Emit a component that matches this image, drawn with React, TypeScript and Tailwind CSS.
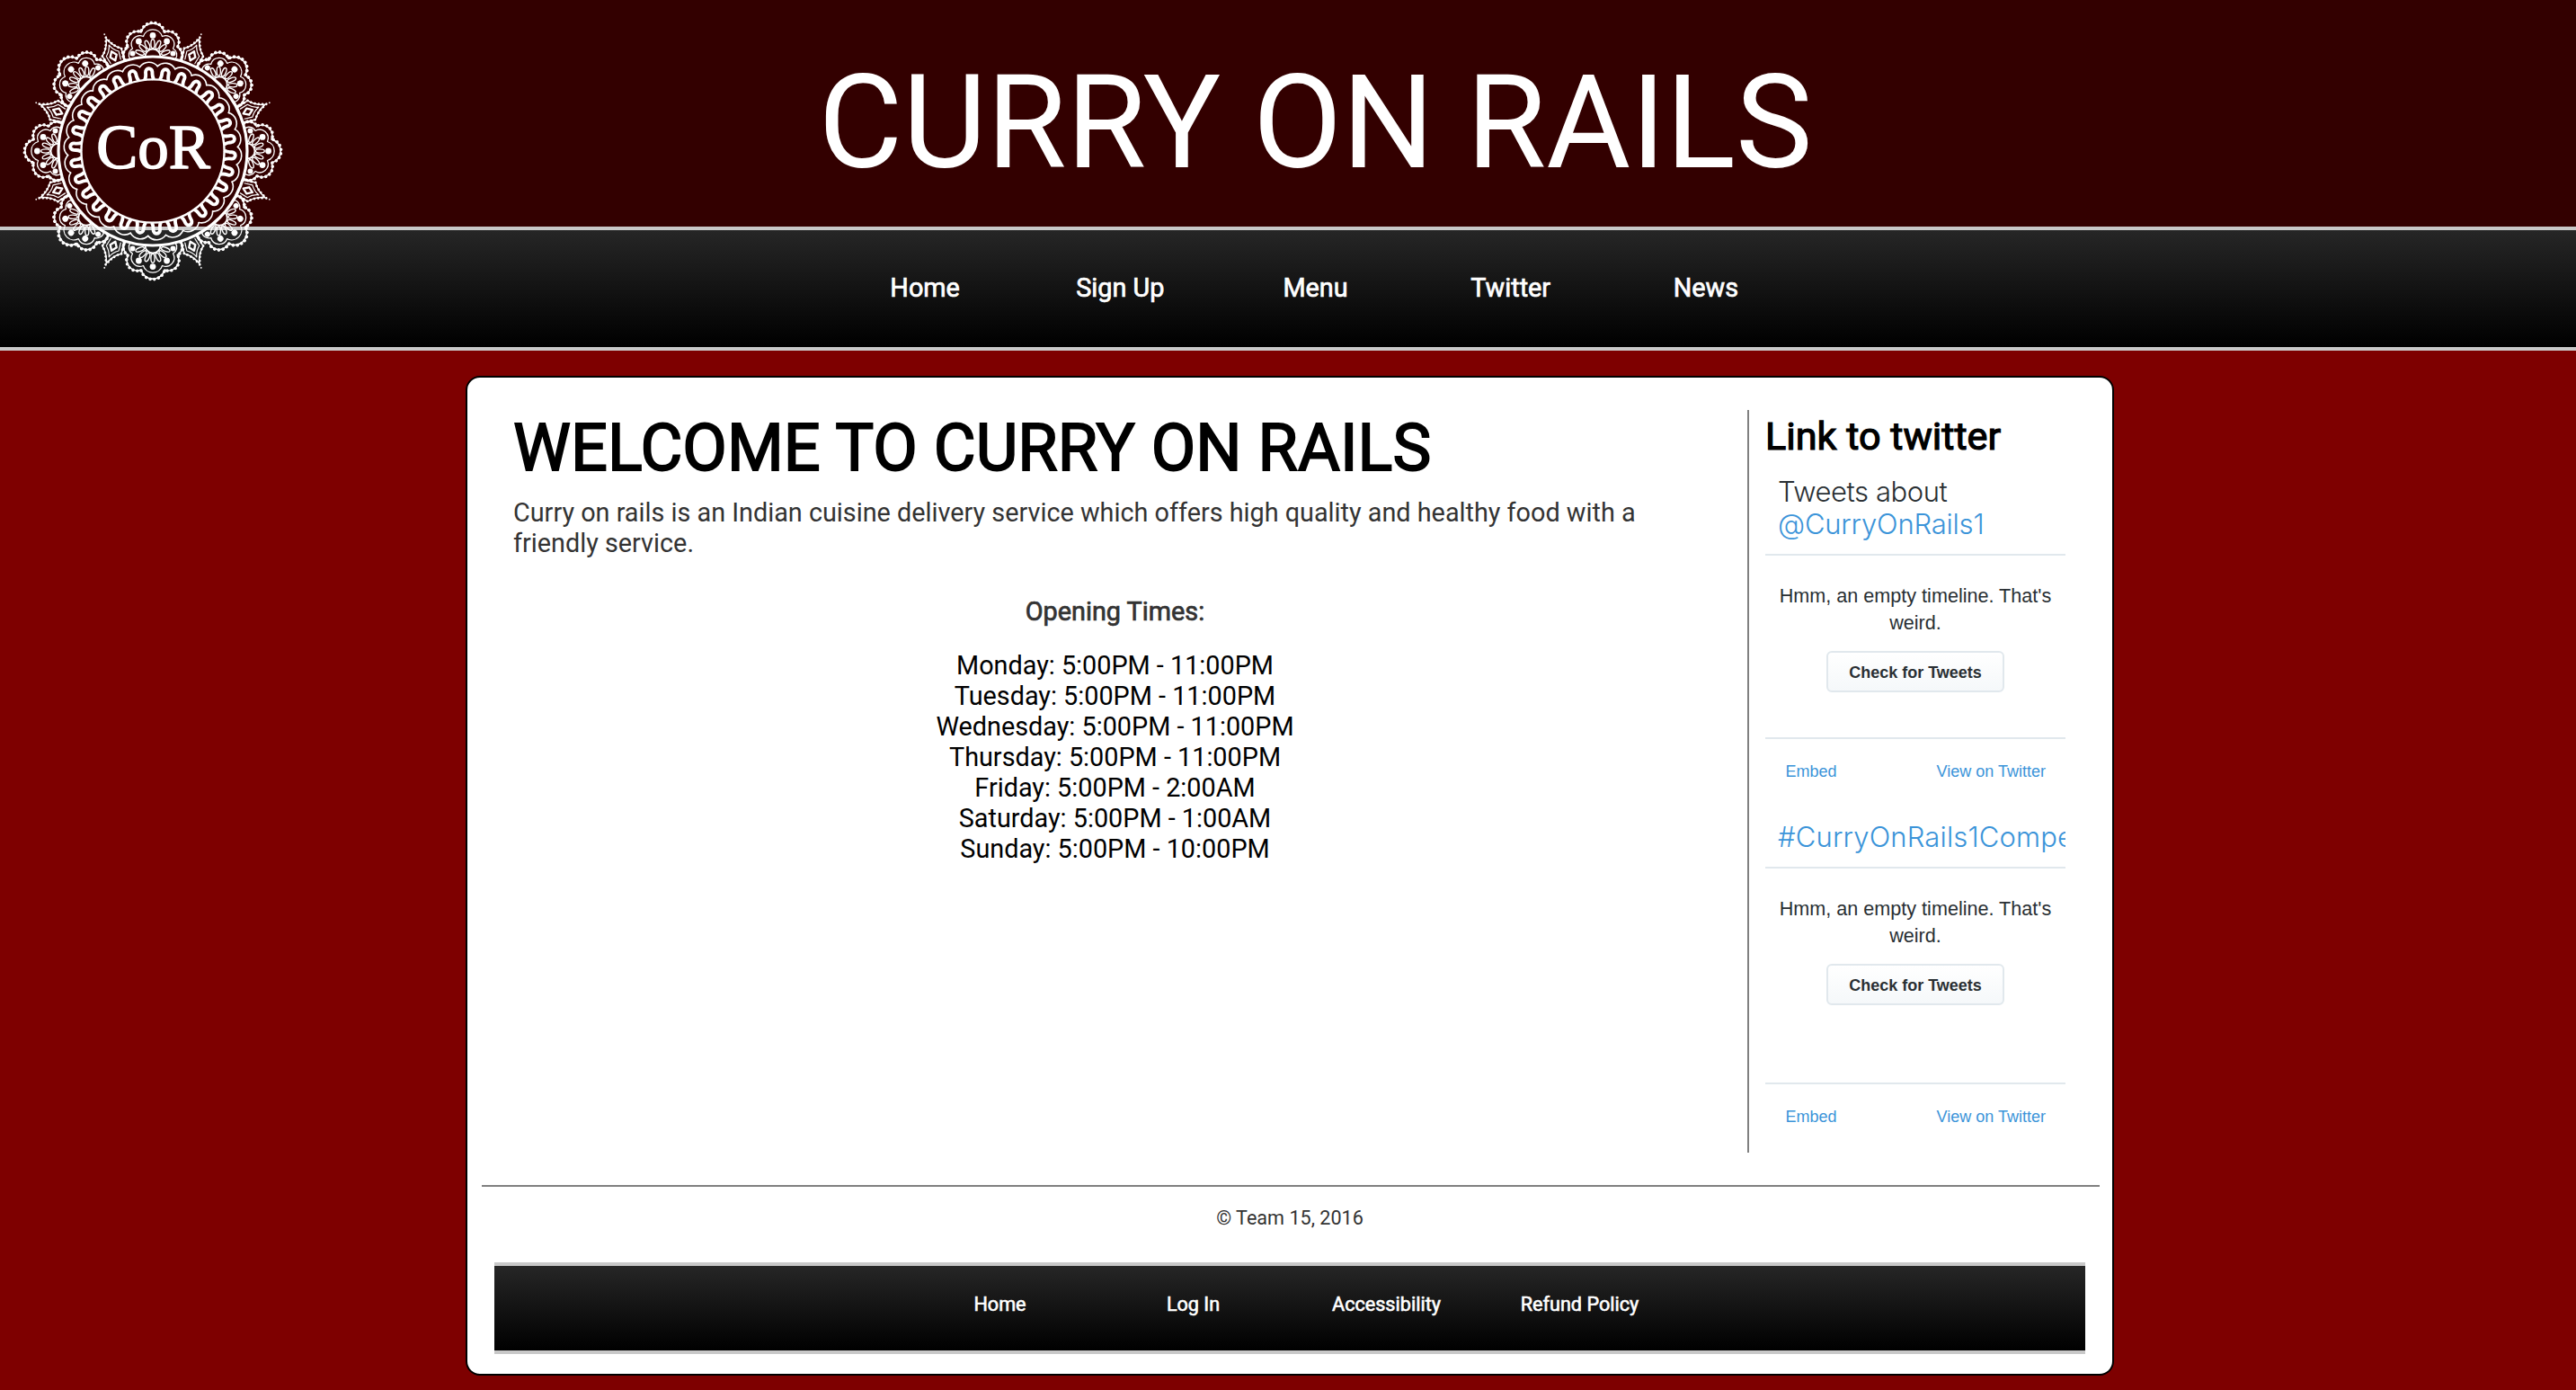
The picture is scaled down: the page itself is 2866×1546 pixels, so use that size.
const LOBES =
  "M-30,-101 A9.3,9.3 0 0 1 -27.2,-115.5 A11.5,11.5 0 0 1 -13,-132 A13.4,13.4 0 0 1 13,-132 A11.5,11.5 0 0 1 27.2,-115.5 A9.3,9.3 0 0 1 30,-101";
const MID_LOBES =
  "M-25,-102 A8,8 0 0 1 -22.5,-114 A9.5,9.5 0 0 1 -10.5,-127.5 A11,11 0 0 1 10.5,-127.5 A9.5,9.5 0 0 1 22.5,-114 A8,8 0 0 1 25,-102";

const PETALS = [-69, -46, -23, 0, 23, 46, 69];
const FLOWERS = [0, 45, 90, 135, 180, 225, 270, 315];
const LOOPS = Array.from({ length: 30 }, (_, i) => i * 12 - 2.8);

function Flower() {
  return (
    <>
      <path d={LOBES} strokeWidth="1.6" />
      <path d={LOBES} strokeWidth="3.6" strokeDasharray="0 4.7" transform="translate(0 -104) scale(1.015) translate(0 104)" />
      <path d={MID_LOBES} strokeWidth="1.3" />
      <path d="M-8.5,-105 A8.5,8.5 0 0 1 8.5,-105" strokeWidth="1.8" />
      {PETALS.map((a) => (
        <ellipse key={a} cx="0" cy="-119.3" rx="2.1" ry="5" strokeWidth="1.4" transform={`rotate(${a} 0 -104)`} />
      ))}
      <g fill="#fff" stroke="none">
        <circle cx="0" cy="-128.6" r="3.4" />
        <circle cx="-15.6" cy="-122" r="3.4" />
        <circle cx="15.6" cy="-122" r="3.4" />
        <circle cx="-22.5" cy="-108.5" r="3" />
        <circle cx="22.5" cy="-108.5" r="3" />
      </g>
    </>
  );
}

function Kite() {
  return (
    <>
      <path d="M-9,-106 L-11.5,-119 Q-4,-124 0,-135 Q4,-124 11.5,-119 L9,-106" strokeWidth="1.5" />
      <path d="M-9,-106 L-11.5,-119 Q-4,-124 0,-137 Q4,-124 11.5,-119 L9,-106" strokeWidth="2.8" strokeDasharray="0 4.4" />
      <path d="M-6,-108 L-7.5,-117 Q-2,-121 0,-127.5 Q2,-121 7.5,-117 L6,-108" strokeWidth="1.2" />
      <path d="M0,-120 L3.8,-114.5 L0,-109 L-3.8,-114.5 Z" strokeWidth="2.4" />
      <circle cx="0" cy="-140.5" r="0.9" fill="#fff" stroke="none" />
    </>
  );
}

function Logo() {
  return (
    <svg
      viewBox="-150 -150 300 300"
      className="absolute left-5 top-[18px] size-[300px]"
      fill="none"
      stroke="#fff"
      strokeLinecap="round"
      strokeLinejoin="round"
    >
      {FLOWERS.map((a) => (
        <g key={a} transform={`rotate(${a})`}>
          <Flower />
        </g>
      ))}
      {FLOWERS.map((a) => (
        <g key={a} transform={`rotate(${a + 22.5})`}>
          <Kite />
        </g>
      ))}
      <circle r="105" strokeWidth="3.2" />
      <circle r="79.6" strokeWidth="2.4" />
      {LOOPS.map((a) => (
        <g key={a} transform={`rotate(${a})`}>
          <path d="M-5.2,-79.5 Q-3.4,-82 -3.7,-88 A3.7,3.9 0 0 1 3.7,-88 Q3.4,-82 5.2,-79.5" strokeWidth="3.9" strokeLinecap="butt" />
          <path d="M-9.9,-94 A12.5,12.5 0 0 1 9.9,-94" strokeWidth="1.6" />
        </g>
      ))}
      <text
        x="0.5"
        y="19"
        textAnchor="middle"
        fill="#fff"
        strokeWidth="1.5"
        className="font-['Liberation_Serif',serif] text-[69px]"
      >
        CoR
      </text>
    </svg>
  );
}

const NAV = ["Home", "Sign Up", "Menu", "Twitter", "News"];
const FOOTER_NAV = ["Home", "Log In", "Accessibility", "Refund Policy"];
const HOURS = [
  "Monday: 5:00PM - 11:00PM",
  "Tuesday: 5:00PM - 11:00PM",
  "Wednesday: 5:00PM - 11:00PM",
  "Thursday: 5:00PM - 11:00PM",
  "Friday: 5:00PM - 2:00AM",
  "Saturday: 5:00PM - 1:00AM",
  "Sunday: 5:00PM - 10:00PM",
];

function EmptyTimeline({ tall = false }: { tall?: boolean }) {
  return (
    <>
      <div
        className={`flex flex-col items-center border-y-2 border-[#e1e8ed] pt-[30px] text-[#292f33] ${tall ? "h-[242px]" : "h-[206px]"}`}
      >
        <p className="w-[310px] text-center text-[21.6px] leading-[30px]">Hmm, an empty timeline. That's weird.</p>
        <button className="mt-4 h-[46px] w-[198px] rounded-md border-2 border-[#e1e8ed] bg-linear-to-b/srgb from-white to-[#f5f8fa] pt-0.5 text-[18px] leading-none font-bold">
          Check for Tweets
        </button>
      </div>
      <div className="flex justify-between pt-[26px] pr-[22px] pl-[22.5px] text-[18px] leading-5 text-[#3b94d9]">
        <a>Embed</a>
        <a>View on Twitter</a>
      </div>
    </>
  );
}

export default function App() {
  return (
    <div className="relative h-[1546px] w-[2866px] overflow-hidden bg-[#7e0000] font-[Roboto,sans-serif] text-[28.8px] leading-[34px] text-black">
      <header className="h-[252px] bg-[#330000] pt-[52px] pl-[61px] text-center text-[144px] leading-[169px] text-white">
        <h1>CURRY ON RAILS</h1>
      </header>
      <nav className="flex h-[138px] justify-center border-y-4 border-[#c8c8c8] bg-linear-to-b/srgb from-[#262626] to-black pt-[47px] pl-[61px] text-white">
        <ul className="grid w-[1086px] grid-cols-5 text-center [-webkit-text-stroke:0.7px_white]">
          {NAV.map((n) => (
            <li key={n}>{n}</li>
          ))}
        </ul>
      </nav>
      <Logo />

      <main className="mt-7 ml-[518px] flex h-[1112px] w-[1834px] flex-col rounded-2xl border-2 border-black bg-white px-4 pt-9">
        <div className="flex h-[826px]">
          <section className="w-[1408px] pl-[35px]">
            <h2 className="text-[72px] leading-[85px] tracking-[0.04px] [-webkit-text-stroke:1.8px_black]">
              WELCOME TO CURRY ON RAILS
            </h2>
            <p className="mt-3 w-[1300px] text-[#333]">
              Curry on rails is an Indian cuisine delivery service which offers high quality and healthy food with a
              friendly service.
            </p>
            <div className="mt-[42px] w-[1339px] text-center">
              <h3 className="text-[#333] [-webkit-text-stroke:0.7px_#333]">Opening Times:</h3>
              <ul className="mt-[26px]">
                {HOURS.map((h) => (
                  <li key={h}>{h}</li>
                ))}
              </ul>
            </div>
          </section>
          <aside className="w-[354px] border-l-2 border-[#808080] pt-1 pl-[18px] font-['Liberation_Sans',sans-serif]">
            <h2 className="font-[Roboto,sans-serif] text-[43.2px] leading-[51px] [-webkit-text-stroke:1.2px_black]">
              Link to twitter
            </h2>
            <div className="mt-[18px] h-[87px] pl-[14px] font-[Inter,sans-serif] text-[31px] leading-9 font-light">
              <p className="tracking-[-0.45px] text-[#292f33]">Tweets about</p>
              <p className="tracking-[-0.2px] text-[#3b94d9]">@CurryOnRails1</p>
            </div>
            <EmptyTimeline />
            <p className="mt-[45px] h-[51px] overflow-hidden pl-[14px] font-[Inter,sans-serif] text-[31px] leading-9 font-light tracking-[0.15px] whitespace-nowrap text-[#3b94d9]">
              #CurryOnRails1Competition
            </p>
            <EmptyTimeline tall />
          </aside>
        </div>
        <footer className="-mr-0.5 mt-9 border-t-2 border-[#808080] pt-[22px] pr-4 pl-[14px] text-center text-[21.6px] leading-[25px]">
          <p className="text-[#333]">© Team 15, 2016</p>
          <div className="mt-[37px] flex h-[102px] justify-center border-y-4 border-[#c8c8c8] bg-linear-to-b/srgb from-[#262626] to-black pt-[30px] text-white">
            <ul className="grid w-[860px] grid-cols-4 [-webkit-text-stroke:0.6px_white]">
              {FOOTER_NAV.map((n) => (
                <li key={n}>{n}</li>
              ))}
            </ul>
          </div>
        </footer>
      </main>
    </div>
  );
}
